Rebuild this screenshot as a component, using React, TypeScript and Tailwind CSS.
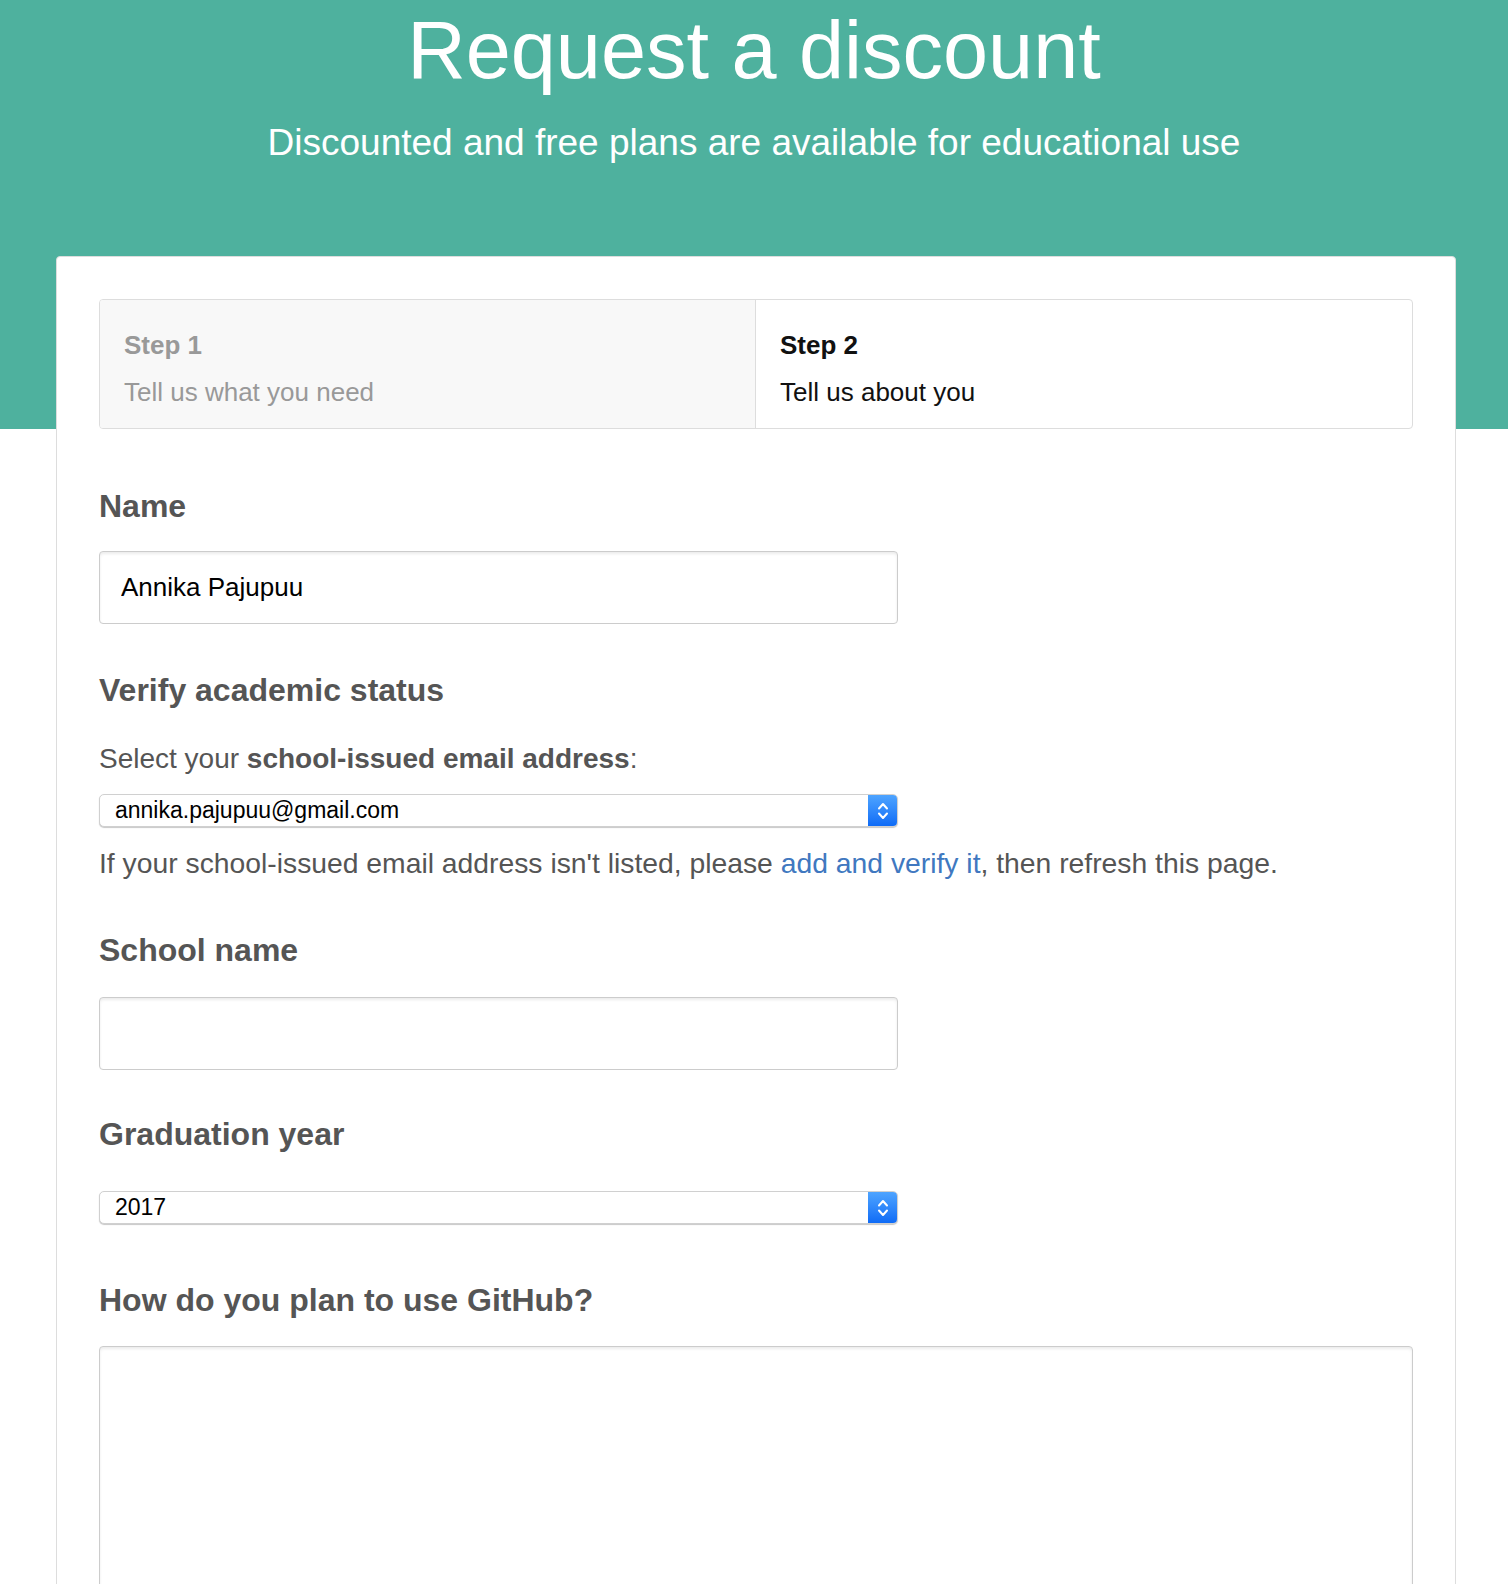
const Chevrons = () => (
  <svg width="12" height="22" viewBox="0 0 12 22" fill="none" stroke="white" strokeWidth="2" strokeLinecap="round" strokeLinejoin="round">
    <path d="M2 8.5 L6 4 L10 8.5" />
    <path d="M2 13.5 L6 18 L10 13.5" />
  </svg>
);

const Select = ({ value }: { value: string }) => (
  <div className="flex h-[33px] w-[799px] overflow-hidden rounded-[5px] border border-[#d0d0d0] bg-white shadow-[0_1px_1px_rgba(0,0,0,0.22)]">
    <div className="flex flex-1 items-center pl-[15px] text-[23px] leading-none text-black">{value}</div>
    <div className="flex w-[29px] items-center justify-center bg-linear-to-b from-[#4ea4ff] to-[#0e6bf6]">
      <Chevrons />
    </div>
  </div>
);

const Label = ({ children, className = "" }: { children: React.ReactNode; className?: string }) => (
  <h3 className={`text-[32px] font-bold leading-none text-[#555] ${className}`}>{children}</h3>
);

const inputCls =
  "block w-[799px] h-[73px] rounded-[4px] border border-[#ccc] bg-white px-[21px] text-[26px] text-black shadow-[inset_0_2px_3px_rgba(0,0,0,0.08)] outline-none";

export default function App() {
  return (
    <div className="min-h-screen bg-white font-['Liberation_Sans',Arial,sans-serif]">
      <header className="h-[429px] bg-[#4eb19e] pt-[10px] text-center text-white">
        <h1 className="text-[81px] leading-none">Request a discount</h1>
        <p className="mt-[33px] text-[37px] leading-none">Discounted and free plans are available for educational use</p>
      </header>

      <div className="-mt-[173px] ml-[56px] w-[1400px] rounded-t-[4px] border border-[#ddd] bg-white px-[42px] pt-[42px] pb-16">
        <div className="grid grid-cols-2 overflow-hidden rounded-[4px] border border-[#ddd]">
          <div className="border-r border-[#ddd] bg-[#f8f8f8] pt-[32px] pb-[23px] pl-[24px] text-[#999]">
            <div className="text-[26px] font-bold leading-none">Step 1</div>
            <div className="mt-[21px] text-[26px] leading-none">Tell us what you need</div>
          </div>
          <div className="pt-[32px] pb-[23px] pl-[24px] text-[#111]">
            <div className="text-[26px] font-bold leading-none">Step 2</div>
            <div className="mt-[21px] text-[26px] leading-none">Tell us about you</div>
          </div>
        </div>

        <form>
          <Label className="mt-[61px]">Name</Label>
          <input className={`${inputCls} mt-[29px]`} defaultValue="Annika Pajupuu" readOnly />

          <Label className="mt-[50px]">Verify academic status</Label>
          <p className="mt-[39px] text-[28px] leading-none text-[#555]">
            Select your <strong>school-issued email address</strong>:
          </p>
          <div className="mt-[21px]">
            <Select value="annika.pajupuu@gmail.com" />
          </div>
          <p className="mt-[22px] text-[28.3px] leading-none text-[#555]">
            If your school-issued email address isn't listed, please{" "}
            <a href="#" className="text-[#4078c0]">add and verify it</a>, then refresh this page.
          </p>

          <Label className="mt-[57px]">School name</Label>
          <input className={`${inputCls} mt-[31px]`} readOnly />

          <Label className="mt-[48px]">Graduation year</Label>
          <div className="mt-[41px]">
            <Select value="2017" />
          </div>

          <Label className="mt-[60px]">How do you plan to use GitHub?</Label>
          <textarea
            className="mt-[30px] block h-[280px] w-full resize-none rounded-[4px] border border-[#ccc] bg-white shadow-[inset_0_2px_3px_rgba(0,0,0,0.08)] outline-none"
            readOnly
          />
        </form>
      </div>
    </div>
  );
}
